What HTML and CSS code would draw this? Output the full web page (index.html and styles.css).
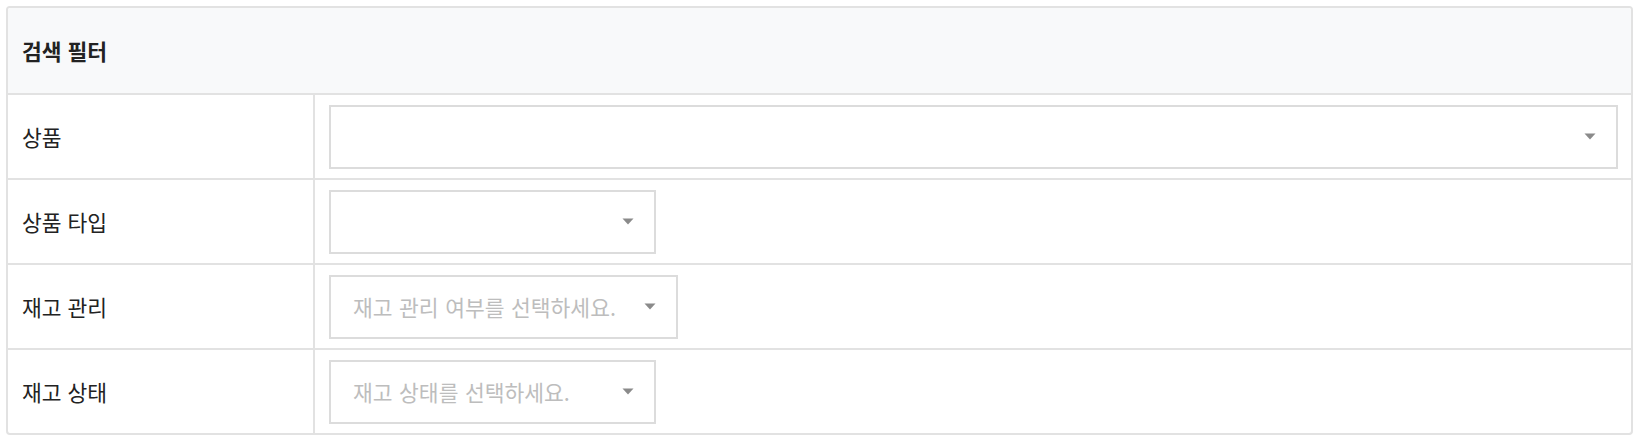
FILE: index.html
```html
<!DOCTYPE html>
<html lang="ko">
<head>
  <meta charset="UTF-8">
  <meta name="viewport" content="width=device-width, initial-scale=1.0">
  <title>검색 필터</title>
  <link rel="stylesheet" href="styles.css">
</head>
<body>

  <div class="filter">
    <div class="filter-head">검색 필터</div>

    <div class="filter-row">
      <div class="filter-label">상품</div>
      <div class="filter-value">
        <div class="select select-full">
          <span class="placeholder"></span>
          <svg class="caret" width="12" height="7" viewBox="0 0 12 7"><path d="M0.5 0.5h11l-5.5 6z" fill="#8a8a8a"/></svg>
        </div>
      </div>
    </div>

    <div class="filter-row">
      <div class="filter-label">상품 타입</div>
      <div class="filter-value">
        <div class="select">
          <span class="placeholder"></span>
          <svg class="caret" width="12" height="7" viewBox="0 0 12 7"><path d="M0.5 0.5h11l-5.5 6z" fill="#8a8a8a"/></svg>
        </div>
      </div>
    </div>

    <div class="filter-row">
      <div class="filter-label">재고 관리</div>
      <div class="filter-value">
        <div class="select">
          <span class="placeholder">재고 관리 여부를 선택하세요.</span>
          <svg class="caret" width="12" height="7" viewBox="0 0 12 7"><path d="M0.5 0.5h11l-5.5 6z" fill="#8a8a8a"/></svg>
        </div>
      </div>
    </div>

    <div class="filter-row">
      <div class="filter-label">재고 상태</div>
      <div class="filter-value">
        <div class="select">
          <span class="placeholder">재고 상태를 선택하세요.</span>
          <svg class="caret" width="12" height="7" viewBox="0 0 12 7"><path d="M0.5 0.5h11l-5.5 6z" fill="#8a8a8a"/></svg>
        </div>
      </div>
    </div>
  </div>

</body>
</html>
```

FILE: styles.css
```css
body {
  margin: 0;
  font-family: "Noto Sans CJK KR", "Noto Sans", sans-serif;
  color: #222;
  background: #fff;
}

.filter {
  margin: 6px 9px 0 6px;
  border: 2px solid #e2e2e2;
  border-radius: 4px;
  overflow: hidden;
}

.filter-head {
  height: 85px;
  display: flex;
  align-items: center;
  padding-left: 14px;
  background-color: #f8f9fa;
  border-bottom: 2px solid #e2e2e2;
  font-size: 21.5px;
  font-weight: 700;
}

.filter-row {
  display: grid;
  grid-template-columns: 307px 1fr;
  height: 83px;
  border-bottom: 2px solid #e2e2e2;
}

.filter-row:last-child {
  border-bottom: none;
}

.filter-label {
  display: flex;
  align-items: center;
  padding-left: 14px;
  border-right: 2px solid #e2e2e2;
  font-size: 21.5px;
}

.filter-value {
  display: flex;
  align-items: center;
  padding: 0 13px 0 14px;
}

.select {
  display: flex;
  align-items: center;
  justify-content: space-between;
  box-sizing: border-box;
  min-width: 327px;
  height: 64px;
  padding: 0 20px 0 22px;
  border: 2px solid #dcdcdc;
  background: #fff;
}

.select-full {
  flex: 1;
}

.placeholder {
  font-size: 21.5px;
  color: #bdbdbd;
  word-spacing: 0.5px;
  margin-right: 28px;
}

.caret {
  flex-shrink: 0;
}
```
